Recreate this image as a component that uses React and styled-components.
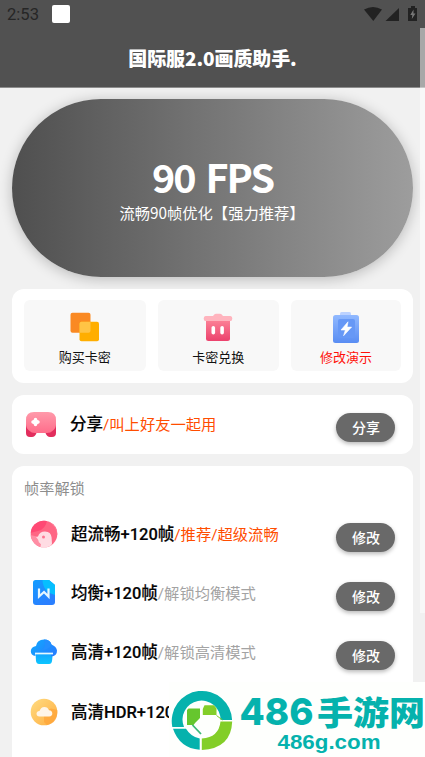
import React from 'react';
import styled, { createGlobalStyle } from 'styled-components';

const GlobalStyle = createGlobalStyle`
  * {
    box-sizing: border-box;
  }
  body {
    margin: 0;
    overflow: hidden;
    background: #f1f1f1;
    font-family: Roboto, 'Noto Sans CJK SC', sans-serif;
  }
`;

const Screen = styled.div`
  position: relative;
  width: 425px;
  height: 757px;
  overflow: hidden;
  background: #f1f1f1;
`;

const Header = styled.header`
  height: 88px;
  background: #515151;
  border-bottom: 1px solid #8d8d8d;
`;

const StatusBar = styled.div`
  display: flex;
  align-items: center;
  height: 28px;
  padding: 0 7px;
  color: #262626;
  font-size: 16.6px;
`;

const Clock = styled.span`
  width: 45px;
  padding-top: 1px;
  line-height: 20px;
`;

const Notice = styled.span`
  width: 18px;
  height: 18px;
  border-radius: 2px;
  background: white;
`;

const StatusIcons = styled.svg`
  margin-left: auto;
`;

const Title = styled.h1`
  margin: 0;
  padding-top: 16px;
  font-family: 'Noto Sans CJK SC', sans-serif;
  font-size: 19px;
  font-weight: 900;
  line-height: 28px;
  letter-spacing: -0.1px;
  text-align: center;
  color: white;
`;

const Content = styled.main`
  display: flex;
  flex-direction: column;
  gap: 12px;
  padding: 11px 12px 0;
`;

const Hero = styled.section`
  display: flex;
  flex-direction: column;
  align-items: center;
  height: 178px;
  padding-top: 52px;
  border-radius: 89px;
  background: linear-gradient(90deg, #4f4f4f, #9d9d9d);
  box-shadow: 0 2px 14px rgba(0, 0, 0, 0.24);
  font-family: 'Noto Sans CJK SC', sans-serif;
  color: white;
`;

const HeroTitle = styled.div`
  margin-bottom: 3px;
  font-size: 39.5px;
  font-weight: 700;
  line-height: 50px;
  letter-spacing: -2px;
  word-spacing: 4px;
`;

const HeroText = styled.div`
  margin-right: 1px;
  font-size: 15.3px;
  line-height: 17px;
`;

const Card = styled.section`
  border-radius: 12px;
  background: white;
`;

const Actions = styled(Card)`
  position: relative;
  display: grid;
  grid-template-columns: 121.5px 121.5px 1fr;
  gap: 12px;
  height: 94px;
  padding: 11px 12px 12px;
`;

const Action = styled.div`
  display: flex;
  flex-direction: column;
  align-items: center;
  padding-top: 12px;
  border-radius: 6px;
  background: #f8f8f8;
  font-size: 13px;
  line-height: 20px;
  color: ${(props) => props.$color || '#111'};
  & svg {
    margin-bottom: 5px;
  }
`;

const ShareCard = styled(Card)`
  height: 59px;
  padding: 0 12px;
`;

const ListCard = styled(Card)`
  height: 400px;
  padding: 12px 12px 0;
`;

const Caption = styled.div`
  height: 27px;
  font-size: 15.2px;
  line-height: 22px;
  color: #8d8d8d;
`;

const Row = styled.div`
  display: flex;
  align-items: flex-start;
  height: 59.2px;
`;

const RowIcon = styled.div`
  flex: none;
  width: ${(props) => (props.$share ? 46 : 47)}px;
  padding: ${(props) => (props.$share ? '14px 0 0 1px' : '15px 0 0 6px')};
  & svg {
    display: block;
  }
`;

const Label = styled.div`
  flex: 1;
  padding-top: 17px;
  font-size: 16.5px;
  font-weight: 500;
  line-height: 25px;
  white-space: nowrap;
  color: #050505;
  -webkit-text-stroke: 0.15px;
`;

const Hint = styled.span`
  font-size: 15.3px;
  font-weight: 400;
  color: ${(props) => (props.$hot ? '#ff4d00' : '#a3a3a3')};
  -webkit-text-stroke: 0;
`;

const Button = styled.button`
  flex: none;
  width: 59px;
  height: 29px;
  margin: 18px 6px 0 0;
  padding: 0 0 2px 1px;
  border: none;
  border-radius: 15px;
  background: #696969;
  box-shadow: 0 2px 4px rgba(0, 0, 0, 0.28);
  font-family: 'Noto Sans CJK SC', sans-serif;
  font-size: 14px;
  font-weight: 500;
  line-height: 26px;
  color: white;
`;

const ScrollThumb = styled.div`
  position: absolute;
  top: 28px;
  right: 0;
  width: 5px;
  height: 585px;
  background: rgba(255, 255, 255, 0.5);
`;

const Watermark = styled.div`
  position: absolute;
  right: 0;
  bottom: 0;
  width: 256px;
  height: 75px;
  background: #fefffd;
`;

const OrdersIcon = () => (
  <svg width="30" height="31" viewBox="0.5 0.3 30 31">
    <rect x="1" y="1" width="20" height="20" rx="2" fill="#fa8922" />
    <rect x="10" y="10" width="19.5" height="19.5" rx="2" fill="#ffae00" />
    <path d="M12 10h9v9q0 2-2 2h-9v-9q0-2 2-2z" fill="#ffc445" />
  </svg>
);

const RedeemIcon = () => (
  <svg width="30" height="31" viewBox="0 0 30 31">
    <defs>
      <linearGradient id="redeem" x2="0" y2="1">
        <stop stopColor="#fc8196" />
        <stop offset="1" stopColor="#ec426d" />
      </linearGradient>
    </defs>
    <path d="M3 8h24v18.500q0 2.500-2.500 2.500h-19q-2.500 0-2.500-2.500z" fill="url(#redeem)" />
    <path d="M2.500 4H10q1.500-2.300 3-2.300h4q1.500 0 3 2.300h7.500q1.800 0 1.800 2.500T27.500 9h-25Q.7 9 .7 6.500T2.500 4z" fill="#ffb4be" />
    <rect x="8.500" y="14" width="3.600" height="8.500" rx="1.800" fill="white" />
    <rect x="17.300" y="14" width="3.600" height="8.500" rx="1.800" fill="white" />
  </svg>
);

const DemoIcon = () => (
  <svg width="30" height="31" viewBox="0 0 30 31">
    <defs>
      <linearGradient id="demo" x2="0" y2="1">
        <stop stopColor="#91b9ff" />
        <stop offset="1" stopColor="#598df3" />
      </linearGradient>
    </defs>
    <path d="M9 5V1.500Q9 0 10.500 0h8Q20 0 20 1.500V5z" fill="#bcd2ff" />
    <rect x="2" y="3" width="26" height="28" rx="2.500" fill="url(#demo)" />
    <rect x="7" y="7" width="17" height="19" rx="2" fill="#6698f6" />
    <path d="M17 9.800l-7 8.200h4.300l-1.700 5.700 8-8.600h-4.500z" fill="white" stroke="white" strokeWidth=".6" />
  </svg>
);

const GamepadIcon = () => (
  <svg width="32" height="32" viewBox="0 0 32 32">
    <defs>
      <linearGradient id="pad" x2="0" y2="1">
        <stop stopColor="#ff9aaa" />
        <stop offset="1" stopColor="#ff6d8b" />
      </linearGradient>
    </defs>
    <path d="M1 14v10Q1 28 5 28h2q3 0 4.500-4h9q1.500 4 4.500 4h2q4 0 4-4V14z" fill="#e22d5d" />
    <path d="M9 3h14q8 0 8 8v4q0 4-3 6.500-2.500 2.500-6 2.500H10q-3.500 0-6-2.500Q1 19 1 15v-4q0-8 8-8z" fill="url(#pad)" />
    <path d="M10.500 10.500v5M8 13h5" stroke="white" strokeWidth="3.400" strokeLinecap="round" />
    <path d="M10.500 9l4 4-4 4-4-4z" fill="white" />
  </svg>
);

const BirdIcon = () => (
  <svg width="28" height="28" viewBox="0 0 28 28">
    <defs>
      <clipPath id="birdClip">
        <circle cx="14" cy="14" r="13.300" />
      </clipPath>
    </defs>
    <g clipPath="url(#birdClip)">
      <rect width="28" height="28" fill="#ff6684" />
      <path d="M0 0h17q-1 9-9 11L0 13z" fill="#ff4974" />
      <path d="M18 1q9 6 9 14h1V0z" fill="#ff7c98" />
      <path d="M0 15l6 1.200 2.500 1.500q-1 5 3 7l-2 4H0z" fill="#ff8da4" />
      <path d="M8 16.500q1.500-5 7-5 6 0 6.600 6l.4 6-2 5H10l1-4q-3-2-3-5l-2-2.500z" fill="#ffdce3" />
    </g>
    <circle cx="13.500" cy="17" r="1.500" fill="#ff7591" />
  </svg>
);

const DocIcon = () => (
  <svg width="28" height="28" viewBox="0 0 28 28">
    <defs>
      <linearGradient id="doc" x2=".5" y2="1">
        <stop stopColor="#129dff" />
        <stop offset="1" stopColor="#2a7fff" />
      </linearGradient>
    </defs>
    <path d="M5.500 1H19l6 5v17q0 3-3 3H6q-3 0-3-3V3.500Q3 1 5.500 1z" fill="url(#doc)" />
    <path d="M12.500 1H19l6 5v10Q13 13 12.500 1z" fill="#06bfff" />
    <path d="M9 9.500v8l5-4.500 4.500 4.500v-8" fill="none" stroke="#e6f7ff" strokeWidth="2.200" />
  </svg>
);

const CupIcon = () => (
  <svg width="28" height="28" viewBox="0 0 28 28">
    <defs>
      <linearGradient id="cup" x2="1" y2=".6">
        <stop stopColor="#10aaff" />
        <stop offset="1" stopColor="#2480ff" />
      </linearGradient>
      <linearGradient id="cupBase" x2="0" y2="1">
        <stop stopColor="#159fff" />
        <stop offset="1" stopColor="#0cc6ff" />
      </linearGradient>
    </defs>
    <path d="M5.500 14h17.500l-1 9q-.4 3-3 3H9q-2.500 0-3-3z" fill="url(#cupBase)" />
    <path d="M6 8q1-6.500 8-6.500 6 0 7.500 5 5 2 5.500 6 .2 5.500-6 6V15H5.500v3Q.8 17.500.8 13 1 9 6 8z" fill="url(#cup)" />
    <path d="M14 1.500q6 0 7.500 5-2 5-10 5.500Q17 9 14 1.500z" fill="#248fff" />
    <path d="M5 15.500h18" stroke="#e5f8ff" strokeWidth="1.700" />
  </svg>
);

const CloudIcon = () => (
  <svg width="28" height="28" viewBox="0 0 28 28">
    <defs>
      <linearGradient id="sun" x2="1" y2="1">
        <stop stopColor="#ffdc82" />
        <stop offset="1" stopColor="#ffad3f" />
      </linearGradient>
    </defs>
    <circle cx="14" cy="14" r="13.300" fill="url(#sun)" />
    <path d="M14 14l7-3.500 6.300 1.500Q28 25 17 27l-3-3z" fill="#ffa63a" opacity=".75" />
    <path d="M9.500 18.500q-3-.3-3-2.800t3.200-3q1-3.800 4.700-3.800 3.500 0 4.600 3.400 3.300.4 3.300 3.200 0 2.700-3 3z" fill="#fff5e7" />
  </svg>
);

const SiteLogo = () => (
  <svg width="256" height="75" viewBox="169 682 256 75">
    <path d="M172.300 727a30.200 30.200 0 1 1 59.800-7H220.500a19 19 0 1 0-36.500 7z" fill="#05b2ad" />
    <path d="M173 728.800h13q5 8.200 13.700 9.800v11.200q-20-1.500-26.700-21z" fill="#05b2ad" />
    <path d="M232.200 721.500q-1 27-30.400 28.500v-11.500q17-1 18.700-17z" fill="#83ce28" />
    <path d="M188.500 708.500H200v9.500l-4.500 4.500-2 2.500H187v-15z" fill="#66c62e" />
    <path d="M204.500 705.300h9.500l2.500 3.200v6.500h-13.700v-6z" fill="#83ce28" />
    <path d="M192.500 725l8.500 9" fill="none" stroke="#3cb878" strokeWidth="1.800" />
    <path d="M216.500 715.500l6 4.500" fill="none" stroke="#83ce28" strokeWidth="1" />
    <text x="239.500" y="724.500" textLength="74" lengthAdjust="spacingAndGlyphs" fill="#05b2ad" fontFamily="Inter, sans-serif" fontSize="37.500" fontWeight="800">
      486
    </text>
    <text x="317" y="724.500" textLength="108" lengthAdjust="spacingAndGlyphs" fill="#05b2ad" fontFamily="'Noto Sans CJK SC', sans-serif" fontSize="33" fontWeight="900">
      手游网
    </text>
    <text x="277.500" y="748.800" textLength="103" lengthAdjust="spacingAndGlyphs" fill="#05b2ad" fontFamily="'Liberation Sans', sans-serif" fontSize="21" fontWeight="700">
      486g.com
    </text>
  </svg>
);

const rows = [
  { icon: <BirdIcon />, label: '超流畅+120帧', hint: '/推荐/超级流畅', hot: true, button: '修改' },
  { icon: <DocIcon />, label: '均衡+120帧', hint: '/解锁均衡模式', button: '修改' },
  { icon: <CupIcon />, label: '高清+120帧', hint: '/解锁高清模式', button: '修改' },
  { icon: <CloudIcon />, label: '高清HDR+120' },
];

const App = () => (
  <>
    <GlobalStyle />
    <Screen>
      <Header>
        <StatusBar>
          <Clock>2:53</Clock>
          <Notice />
          <StatusIcons width="55" height="18" viewBox="363 5 55 18" fill="#222">
            <path d="M364 9.500q9-5 18 0L373.300 21z" />
            <path d="M399 8v13h-13.500z" />
            <path d="M411 6h4v2h2v13h-9V8h3z" />
            <path d="M413.500 9.500l-3.200 5.500h2l-.5 4 3.700-5.500h-2z" fill="#777" />
          </StatusIcons>
        </StatusBar>
        <Title>国际服2.0画质助手.</Title>
      </Header>
      <Content>
        <Hero>
          <HeroTitle>90 FPS</HeroTitle>
          <HeroText>流畅90帧优化【强力推荐】</HeroText>
        </Hero>
        <Actions>
          <Action>
            <OrdersIcon />
            购买卡密
          </Action>
          <Action>
            <RedeemIcon />
            卡密兑换
          </Action>
          <Action $color="#ff1008">
            <DemoIcon />
            修改演示
          </Action>
        </Actions>
        <ShareCard>
          <Row>
            <RowIcon $share>
              <GamepadIcon />
            </RowIcon>
            <Label>
              分享<Hint $hot>/叫上好友一起用</Hint>
            </Label>
            <Button>分享</Button>
          </Row>
        </ShareCard>
        <ListCard>
          <Caption>帧率解锁</Caption>
          {rows.map((row) => (
            <Row key={row.label}>
              <RowIcon>{row.icon}</RowIcon>
              <Label>
                {row.label}
                {row.hint && <Hint $hot={row.hot}>{row.hint}</Hint>}
              </Label>
              {row.button && <Button>{row.button}</Button>}
            </Row>
          ))}
        </ListCard>
      </Content>
      <ScrollThumb />
      <Watermark>
        <SiteLogo />
      </Watermark>
    </Screen>
  </>
);

export default App;
